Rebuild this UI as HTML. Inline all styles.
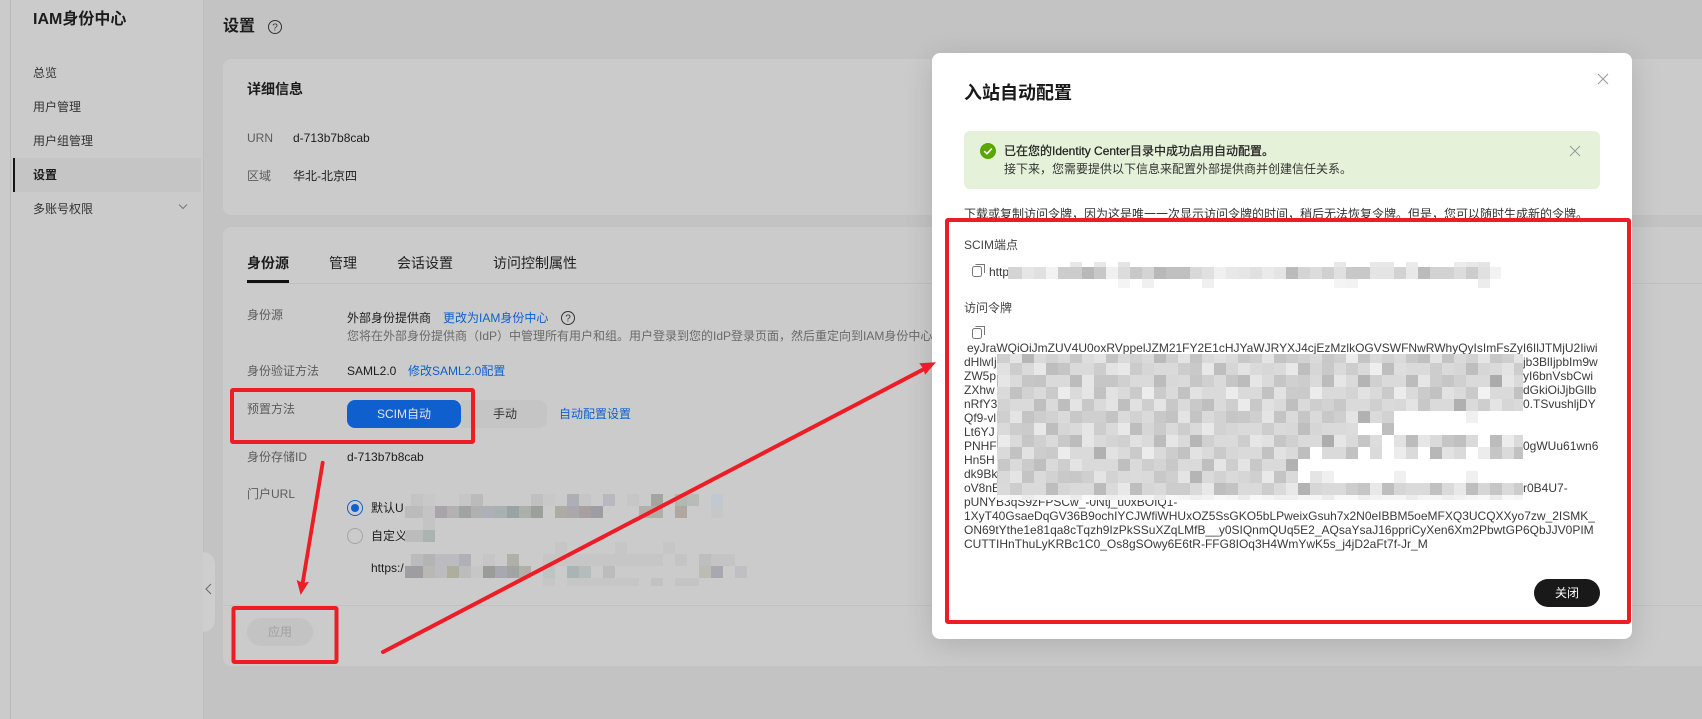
<!DOCTYPE html>
<html lang="zh-CN"><head><meta charset="utf-8"><title>入站自动配置</title>
<style>
html,body{margin:0;padding:0}
body{width:1702px;height:719px;overflow:hidden;position:relative;background:#c3c3c3;font-family:"Liberation Sans","Noto Sans CJK SC",sans-serif;font-size:12px;color:#1c1c1c}
.a{position:absolute}
.t{position:absolute;white-space:nowrap;line-height:16px;font-size:12px}
.g{color:#5c5c5c}
.l{color:#0f5fcf}
.b{font-weight:bold}
.k{position:absolute;left:964px;white-space:nowrap;line-height:14px;font-size:12px;color:#3a3a3a}
</style></head><body>

<div class="a" style="left:0;top:0;width:10px;height:719px;background:#cbcbcb"></div>
<div class="a" style="left:10px;top:0;width:1px;height:719px;background:#b9b9b9"></div>
<div class="a" style="left:11px;top:0;width:192px;height:719px;background:#cbcbcb;border-right:1px solid #bdbdbd"></div>
<div class="t b" style="left:33px;top:11px;font-size:16px;line-height:18px">IAM身份中心</div>
<div class="t" style="left:33px;top:65px;color:#333">总览</div>
<div class="t" style="left:33px;top:99px;color:#333">用户管理</div>
<div class="t" style="left:33px;top:133px;color:#333">用户组管理</div>
<div class="a" style="left:13px;top:158px;width:188px;height:34px;background:#c5c5c5"></div>
<div class="a" style="left:13px;top:158px;width:2px;height:34px;background:#151515"></div>
<div class="t b" style="left:33px;top:167px">设置</div>
<div class="t" style="left:33px;top:201px;color:#333">多账号权限</div>
<svg class="a" style="left:178px;top:203px" width="10" height="8"><path d="M1 1.5L5 5.5L9 1.5" fill="none" stroke="#777" stroke-width="1"/></svg>
<div class="a" style="left:203px;top:552px;width:12px;height:80px;background:#cecece;border-radius:0 12px 12px 0"></div>
<svg class="a" style="left:205px;top:583px" width="8" height="12"><path d="M6 1L1 6L6 11" fill="none" stroke="#6d6d6d" stroke-width="1.1"/></svg>

<div class="t b" style="left:223px;top:18px;font-size:16px;line-height:18px">设置</div>
<svg class="a" style="left:267px;top:19px" width="16" height="16"><circle cx="8" cy="8" r="6.5" fill="none" stroke="#333" stroke-width="1"/><text x="8" y="11.5" font-size="10" text-anchor="middle" fill="#333" font-family="Liberation Sans">?</text></svg>

<div class="a" style="left:223px;top:59px;width:1479px;height:156px;background:#cbcbcb;border-radius:8px 0 0 8px"></div>
<div class="t b" style="left:247px;top:81px;font-size:14px">详细信息</div>
<div class="t g" style="left:247px;top:130px">URN</div>
<div class="t" style="left:293px;top:130px">d-713b7b8cab</div>
<div class="t g" style="left:247px;top:168px">区域</div>
<div class="t" style="left:293px;top:168px">华北-北京四</div>

<div class="a" style="left:223px;top:227px;width:1479px;height:439px;background:#cbcbcb;border-radius:8px 0 0 8px"></div>
<div class="t b" style="left:247px;top:255px;font-size:14px">身份源</div>
<div class="t" style="left:329px;top:255px;font-size:14px;color:#222">管理</div>
<div class="t" style="left:397px;top:255px;font-size:14px;color:#222">会话设置</div>
<div class="t" style="left:493px;top:255px;font-size:14px;color:#222">访问控制属性</div>
<div class="a" style="left:247px;top:283px;width:1455px;height:1px;background:#c0c0c0"></div>
<div class="a" style="left:247px;top:280px;width:42px;height:3px;background:#111"></div>

<div class="t g" style="left:247px;top:307px">身份源</div>
<div class="t" style="left:347px;top:310px">外部身份提供商</div>
<div class="t l" style="left:443px;top:310px">更改为IAM身份中心</div>
<svg class="a" style="left:560px;top:310px" width="16" height="16"><circle cx="8" cy="8" r="6.5" fill="none" stroke="#333" stroke-width="1"/><text x="8" y="11.5" font-size="10" text-anchor="middle" fill="#333" font-family="Liberation Sans">?</text></svg>
<div class="t" style="left:347px;top:328px;color:#6a6a6a;width:585px;overflow:hidden">您将在外部身份提供商（IdP）中管理所有用户和组。用户登录到您的IdP登录页面，然后重定向到IAM身份中心</div>
<div class="t g" style="left:247px;top:363px">身份验证方法</div>
<div class="t" style="left:347px;top:363px">SAML2.0</div>
<div class="t l" style="left:408px;top:363px">修改SAML2.0配置</div>
<div class="t g" style="left:247px;top:401px">预置方法</div>
<div class="a" style="left:461px;top:400px;width:86px;height:28px;background:#c5c5c5;border-radius:0 8px 8px 0"></div>
<div class="t" style="left:493px;top:406px;color:#333">手动</div>
<div class="a" style="left:347px;top:400px;width:114px;height:28px;line-height:28px;text-align:center;background:#0f5fcf;border-radius:8px;color:#e4e4e4">SCIM自动</div>
<div class="t l" style="left:559px;top:406px">自动配置设置</div>
<div class="t g" style="left:247px;top:449px">身份存储ID</div>
<div class="t" style="left:347px;top:449px">d-713b7b8cab</div>
<div class="t g" style="left:247px;top:486px">门户URL</div>
<svg class="a" style="left:346px;top:499px" width="18" height="46"><circle cx="9" cy="9" r="7.5" fill="none" stroke="#0f5fcf" stroke-width="1"/><circle cx="9" cy="9" r="4" fill="#0f5fcf"/><circle cx="9" cy="37" r="7.5" fill="none" stroke="#a5a5a5" stroke-width="1"/></svg>
<div class="t" style="left:371px;top:500px">默认U</div>
<div class="t" style="left:371px;top:528px">自定义</div>
<div class="t" style="left:371px;top:560px">https:/</div>
<div class="a" style="left:223px;top:605px;width:1479px;height:1px;background:#c1c1c1"></div>
<div class="a" style="left:247px;top:618px;width:66px;height:28px;line-height:28px;text-align:center;background:#c3c3c3;border-radius:14px;color:#a0a0a0">应用</div>

<!-- modal -->
<div class="a" style="left:932px;top:53px;width:700px;height:586px;background:#fff;border-radius:8px;box-shadow:0 6px 30px rgba(0,0,0,.14)"></div>
<div class="t b" style="left:964px;top:82px;font-size:18px;line-height:22px;color:#191919">入站自动配置</div>
<svg class="a" style="left:1597px;top:73px" width="12" height="12"><path d="M1 1L11 11M11 1L1 11" stroke="#999" stroke-width="1" fill="none"/></svg>
<div class="a" style="left:964px;top:131px;width:636px;height:58px;background:#e5f1d8;border-radius:6px"></div>
<svg class="a" style="left:980px;top:143px" width="16" height="16"><circle cx="8" cy="8" r="8" fill="#5aa700"/><path d="M4.2 8.2L7 10.8L11.8 5.6" fill="none" stroke="#fff" stroke-width="1.6"/></svg>
<div class="t" style="left:1004px;top:143px;color:#222;-webkit-text-stroke:.25px #222">已在您的Identity Center目录中成功启用自动配置。</div>
<div class="t" style="left:1004px;top:161px;color:#333">接下来，您需要提供以下信息来配置外部提供商并创建信任关系。</div>
<svg class="a" style="left:1569px;top:145px" width="12" height="12"><path d="M1 1L11 11M11 1L1 11" stroke="#999" stroke-width="1" fill="none"/></svg>
<div class="t" style="left:964px;top:206px;color:#333">下载或复制访问令牌，因为这是唯一一次显示访问令牌的时间，稍后无法恢复令牌。但是，您可以随时生成新的令牌。</div>
<div class="a" style="left:949px;top:222px;width:678px;height:398px;background:#fff"></div>
<div class="t" style="left:964px;top:237px;color:#444">SCIM端点</div>
<svg class="a" style="left:971px;top:263px" width="16" height="15"><rect x="1.5" y="3.5" width="9" height="10" rx="2" fill="none" stroke="#777"/><path d="M4.5 1.5H13.5V10" fill="none" stroke="#777"/></svg>
<div class="t" style="left:989px;top:264px;color:#333">http</div>
<div class="t" style="left:964px;top:300px;color:#444">访问令牌</div>
<svg class="a" style="left:971px;top:325px" width="16" height="15"><rect x="1.5" y="3.5" width="9" height="10" rx="2" fill="none" stroke="#777"/><path d="M4.5 1.5H13.5V10" fill="none" stroke="#777"/></svg>

<div class="k" style="left:967px;top:341px">eyJraWQiOiJmZUV4U0oxRVppelJZM21FY2E1cHJYaWJRYXJ4cjEzMzlkOGVSWFNwRWhyQyIsImFsZyI6IlJTMjU2Iiwi</div>
<div class="k" style="top:355px">dHlwIj</div><div class="k" style="left:1523px;top:355px">jb3BlIjpbIm9w</div>
<div class="k" style="top:369px">ZW5p</div><div class="k" style="left:1523px;top:369px">yI6bnVsbCwi</div>
<div class="k" style="top:383px">ZXhw</div><div class="k" style="left:1523px;top:383px">dGkiOiJjbGllb</div>
<div class="k" style="top:397px">nRfY3</div><div class="k" style="left:1523px;top:397px">0.TSvushljDY</div>
<div class="k" style="top:411px">Qf9-vl</div>
<div class="k" style="top:425px">Lt6YJ</div>
<div class="k" style="top:439px">PNHF</div><div class="k" style="left:1523px;top:439px">0gWUu61wn6</div>
<div class="k" style="top:453px">Hn5H</div>
<div class="k" style="top:467px">dk9Bk</div>
<div class="k" style="top:481px">oV8nE</div><div class="k" style="left:1523px;top:481px">r0B4U7-</div>
<div class="k" style="top:495px">pUNYB3qS9zFPSCw_-0Ntj_u0xBOIQ1-</div>
<div class="k" style="top:509px">1XyT40GsaeDqGV36B9ochIYCJWfiWHUxOZ5SsGKO5bLPweixGsuh7x2N0eIBBM5oeMFXQ3UCQXXyo7zw_2ISMK_</div>
<div class="k" style="top:523px">ON69tYthe1e81qa8cTqzh9IzPkSSuXZqLMfB__y0SIQnmQUq5E2_AQsaYsaJ16ppriCyXen6Xm2PbwtGP6QbJJV0PIM</div>
<div class="k" style="top:537px">CUTTIHnThuLyKRBc1C0_Os8gSOwy6E6tR-FFG8IOq3H4WmYwK5s_j4jD2aFt7f-Jr_M</div>
<div class="a" style="left:1534px;top:579px;width:66px;height:28px;line-height:28px;text-align:center;background:#191919;border-radius:14px;color:#fff">关闭</div>

<!-- overlay: mosaics, red annotations -->
<svg class="a" style="left:0;top:0" width="1702" height="719" shape-rendering="crispEdges">
<defs>
<pattern id="pa" patternUnits="userSpaceOnUse" x="998" y="351" width="84" height="60">
<rect width="84" height="60" fill="#dadada"/>
<rect x="0" width="12" height="12" fill="#cfcfcf"/><rect x="12" width="12" height="12" fill="#e4e4e4"/><rect x="24" width="12" height="12" fill="#c4c4c4"/><rect x="48" width="12" height="12" fill="#d2d2d2"/><rect x="72" width="12" height="12" fill="#c8c8c8"/>
<rect x="12" y="12" width="12" height="12" fill="#cdcdcd"/><rect x="36" y="12" width="12" height="12" fill="#e8e8e8"/><rect x="48" y="12" width="12" height="12" fill="#bebebe"/><rect x="60" y="12" width="12" height="12" fill="#d6d6d6"/>
<rect x="0" y="24" width="12" height="12" fill="#e6e6e6"/><rect x="24" y="24" width="12" height="12" fill="#c6c6c6"/><rect x="36" y="24" width="12" height="12" fill="#d0d0d0"/><rect x="72" y="24" width="12" height="12" fill="#bcbcbc"/>
<rect x="12" y="36" width="12" height="12" fill="#c2c2c2"/><rect x="24" y="36" width="12" height="12" fill="#e2e2e2"/><rect x="48" y="36" width="12" height="12" fill="#cacaca"/><rect x="60" y="36" width="12" height="12" fill="#ececec"/>
<rect x="0" y="48" width="12" height="12" fill="#c8c8c8"/><rect x="36" y="48" width="12" height="12" fill="#bfbfbf"/><rect x="60" y="48" width="12" height="12" fill="#cecece"/><rect x="72" y="48" width="12" height="12" fill="#e4e4e4"/>
</pattern>
<pattern id="pb" patternUnits="userSpaceOnUse" x="998" y="351" width="132" height="36">
<rect x="24" width="12" height="12" fill="#000" opacity=".07"/><rect x="84" width="12" height="12" fill="#fff" opacity=".3"/>
<rect x="60" y="12" width="12" height="12" fill="#000" opacity=".08"/><rect x="108" y="12" width="12" height="12" fill="#fff" opacity=".25"/><rect x="0" y="12" width="12" height="12" fill="#fff" opacity=".2"/>
<rect x="36" y="24" width="12" height="12" fill="#000" opacity=".06"/><rect x="96" y="24" width="12" height="12" fill="#000" opacity=".09"/>
</pattern>
</defs>
<rect x="997" y="354" width="526" height="146" fill="url(#pa)"/>
<rect x="997" y="354" width="526" height="146" fill="url(#pb)"/>
<g fill="#fff">
<rect x="1394" y="411" width="129" height="24"/>
<rect x="1358" y="423" width="24" height="12"/>
<rect x="1382" y="435" width="12" height="12"/><rect x="1478" y="435" width="12" height="12"/>
<rect x="1310" y="447" width="12" height="12"/><rect x="1358" y="447" width="12" height="12"/><rect x="1382" y="447" width="12" height="12"/><rect x="1418" y="447" width="12" height="12"/><rect x="1466" y="447" width="12" height="12"/>
<rect x="1298" y="459" width="225" height="24"/>
<rect x="997" y="495" width="526" height="5" opacity=".72"/>
</g>
<rect x="1466" y="411" width="12" height="12" fill="#f0f0f0"/>
<rect x="1310" y="471" width="12" height="12" fill="#e4e4e4"/><rect x="1322" y="471" width="12" height="12" fill="#f0f0f0"/><rect x="1394" y="471" width="12" height="12" fill="#f0f0f0"/><rect x="1466" y="471" width="12" height="12" fill="#f0f0f0"/>

<!-- SCIM endpoint mosaic -->
<g>
<rect x="1008" y="267" width="14" height="12" fill="#d4d4d4"/><rect x="1022" y="267" width="12" height="12" fill="#e6e6e6"/><rect x="1034" y="267" width="12" height="12" fill="#e0e0e0"/><rect x="1046" y="267" width="12" height="12" fill="#f2f2f2"/><rect x="1058" y="267" width="24" height="12" fill="#cccccc"/><rect x="1082" y="267" width="12" height="12" fill="#b8b8b8"/><rect x="1094" y="267" width="12" height="12" fill="#c8c8c8"/><rect x="1106" y="267" width="12" height="12" fill="#f0f0f0"/><rect x="1118" y="267" width="12" height="12" fill="#dcdcdc"/><rect x="1130" y="267" width="12" height="12" fill="#c8c8c8"/><rect x="1142" y="267" width="12" height="12" fill="#d4d4d4"/><rect x="1154" y="267" width="12" height="12" fill="#b8b8b8"/><rect x="1166" y="267" width="24" height="12" fill="#c0c0c0"/><rect x="1190" y="267" width="12" height="12" fill="#d8d8d8"/><rect x="1202" y="267" width="12" height="12" fill="#e0e0e0"/><rect x="1214" y="267" width="12" height="12" fill="#f0f0f0"/><rect x="1226" y="267" width="12" height="12" fill="#e8e8e8"/><rect x="1238" y="267" width="12" height="12" fill="#e6e6e6"/><rect x="1250" y="267" width="12" height="12" fill="#e0e0e0"/><rect x="1262" y="267" width="12" height="12" fill="#eaeaea"/><rect x="1274" y="267" width="12" height="12" fill="#e4e4e4"/><rect x="1286" y="267" width="12" height="12" fill="#bbbbbb"/><rect x="1298" y="267" width="12" height="12" fill="#d4d4d4"/><rect x="1310" y="267" width="12" height="12" fill="#dcdcdc"/><rect x="1322" y="267" width="12" height="12" fill="#d0d0d0"/><rect x="1334" y="267" width="12" height="12" fill="#e0e0e0"/><rect x="1346" y="267" width="24" height="12" fill="#c8c8c8"/><rect x="1370" y="267" width="24" height="12" fill="#e4e4e4"/><rect x="1394" y="267" width="12" height="12" fill="#d2d2d2"/><rect x="1406" y="267" width="12" height="12" fill="#e8e8e8"/><rect x="1418" y="267" width="12" height="12" fill="#bbbbbb"/><rect x="1430" y="267" width="24" height="12" fill="#d2d2d2"/><rect x="1454" y="267" width="12" height="12" fill="#dcdcdc"/><rect x="1466" y="267" width="12" height="12" fill="#cccccc"/><rect x="1478" y="267" width="12" height="12" fill="#e0e0e0"/><rect x="1490" y="267" width="11" height="12" fill="#f2f2f2"/>
<rect x="1070" y="262" width="12" height="5" fill="#e8e8e8"/><rect x="1094" y="262" width="12" height="5" fill="#e8e8e8"/><rect x="1118" y="262" width="12" height="5" fill="#e4e4e4"/><rect x="1334" y="262" width="12" height="5" fill="#e8e8e8"/><rect x="1370" y="262" width="24" height="5" fill="#e8e8e8"/><rect x="1406" y="262" width="12" height="5" fill="#eaeaea"/><rect x="1454" y="262" width="12" height="5" fill="#ececec"/><rect x="1466" y="262" width="12" height="5" fill="#e8e8e8"/><rect x="1478" y="262" width="12" height="5" fill="#e4e4e4"/>
<rect x="1118" y="279" width="12" height="9" fill="#f4f4f4"/><rect x="1142" y="279" width="12" height="9" fill="#f0f0f0"/><rect x="1202" y="279" width="12" height="9" fill="#f0f0f0"/><rect x="1334" y="279" width="12" height="9" fill="#f4f4f4"/><rect x="1346" y="279" width="12" height="9" fill="#f2f2f2"/><rect x="1478" y="279" width="12" height="9" fill="#ececec"/>
</g>

<!-- portal url mosaic -->
<g>
<rect x="411" y="494" width="12" height="12" fill="#c4c4c4"/><rect x="423" y="494" width="12" height="12" fill="#c8c8c8"/><rect x="459" y="494" width="12" height="12" fill="#c6c6c6"/><rect x="471" y="494" width="12" height="12" fill="#bbbbbb"/><rect x="531" y="494" width="12" height="12" fill="#c0c0c0"/><rect x="543" y="494" width="12" height="12" fill="#c8c8c8"/><rect x="567" y="494" width="12" height="12" fill="#aeaeb6"/><rect x="579" y="494" width="12" height="12" fill="#c6c6c6"/><rect x="603" y="494" width="12" height="12" fill="#b8b8c0"/><rect x="627" y="494" width="12" height="12" fill="#c6c6c6"/><rect x="651" y="494" width="12" height="12" fill="#a5a5a0"/><rect x="675" y="494" width="12" height="12" fill="#b0b8b0"/><rect x="687" y="494" width="12" height="12" fill="#b8bcb8"/><rect x="711" y="494" width="12" height="12" fill="#c0c8d0"/>
<rect x="405" y="506" width="18" height="12" fill="#bbbbbb"/><rect x="423" y="506" width="12" height="12" fill="#c4c4c4"/><rect x="435" y="506" width="12" height="12" fill="#a8a4a8"/><rect x="447" y="506" width="12" height="12" fill="#b4b0b4"/><rect x="459" y="506" width="12" height="12" fill="#a0a4a0"/><rect x="471" y="506" width="12" height="12" fill="#b0b0b0"/><rect x="483" y="506" width="12" height="12" fill="#aeb0b8"/><rect x="495" y="506" width="12" height="12" fill="#a8b0b0"/><rect x="507" y="506" width="12" height="12" fill="#98a4a4"/><rect x="519" y="506" width="12" height="12" fill="#acb0ac"/><rect x="531" y="506" width="12" height="12" fill="#9ca09c"/><rect x="555" y="506" width="12" height="12" fill="#aeaaa4"/><rect x="567" y="506" width="12" height="12" fill="#aaa8ac"/><rect x="579" y="506" width="12" height="12" fill="#a8a0a0"/><rect x="591" y="506" width="12" height="12" fill="#a09ca4"/><rect x="639" y="506" width="12" height="12" fill="#b4b0a8"/><rect x="651" y="506" width="12" height="12" fill="#b0aea8"/><rect x="675" y="506" width="12" height="12" fill="#b0a8a0"/><rect x="711" y="506" width="12" height="12" fill="#c4c8c8"/>
<rect x="423" y="518" width="12" height="12" fill="#c4c4c4"/><rect x="405" y="530" width="18" height="12" fill="#bcbcbc"/><rect x="423" y="530" width="12" height="12" fill="#aab4b0"/>
<rect x="555" y="542" width="12" height="12" fill="#c6c6c6"/><rect x="615" y="542" width="12" height="12" fill="#c6c6c6"/><rect x="663" y="542" width="12" height="12" fill="#c6c6c6"/>
<rect x="543" y="554" width="120" height="12" fill="#c6c6c6"/><rect x="411" y="554" width="12" height="12" fill="#b8bcbc"/><rect x="423" y="554" width="12" height="12" fill="#b4b4b4"/><rect x="435" y="554" width="12" height="12" fill="#bcbcc0"/><rect x="447" y="554" width="12" height="12" fill="#bcbcc0"/><rect x="459" y="554" width="12" height="12" fill="#b0b0b8"/><rect x="483" y="554" width="12" height="12" fill="#c6c6c6"/><rect x="507" y="554" width="12" height="12" fill="#b0b0a8"/><rect x="675" y="554" width="12" height="12" fill="#c4c4c4"/><rect x="699" y="554" width="12" height="12" fill="#bebec0"/><rect x="711" y="554" width="24" height="12" fill="#c4c4c4"/>
<rect x="405" y="566" width="18" height="12" fill="#9e9ea2"/><rect x="423" y="566" width="12" height="12" fill="#b8b8b4"/><rect x="435" y="566" width="12" height="12" fill="#bcbcc0"/><rect x="447" y="566" width="12" height="12" fill="#aeae9e"/><rect x="459" y="566" width="12" height="12" fill="#bcbcbc"/><rect x="471" y="566" width="12" height="12" fill="#c6c6c6"/><rect x="483" y="566" width="12" height="12" fill="#9a9c98"/><rect x="495" y="566" width="12" height="12" fill="#a8a8b0"/><rect x="507" y="566" width="12" height="12" fill="#a0a4a4"/><rect x="519" y="566" width="12" height="12" fill="#b0b0a8"/><rect x="543" y="566" width="12" height="12" fill="#bcc4c4"/><rect x="567" y="566" width="12" height="12" fill="#aab4b4"/><rect x="579" y="566" width="12" height="12" fill="#b4bcbc"/><rect x="603" y="566" width="12" height="12" fill="#bcbcbc"/><rect x="699" y="566" width="12" height="12" fill="#bcbcb4"/><rect x="711" y="566" width="12" height="12" fill="#a8a8b0"/><rect x="735" y="566" width="12" height="12" fill="#c0c0c4"/>
<rect x="543" y="578" width="12" height="8" fill="#c6c6c6"/><rect x="567" y="578" width="72" height="8" fill="#c6c6c6"/><rect x="651" y="578" width="12" height="8" fill="#c2c2c2"/><rect x="675" y="578" width="24" height="8" fill="#c4c4c4"/>
</g>

<g shape-rendering="auto" fill="none" stroke="#ee1c25" stroke-linejoin="round">
<rect x="232" y="390" width="241" height="52" stroke-width="4" rx="1"/>
<rect x="233.500" y="608" width="103" height="54" stroke-width="4" rx="1"/>
<rect x="947" y="220" width="682" height="402" stroke-width="4" rx="1"/>
<path d="M322.700 462.700L302.500 584" stroke-width="3.800" stroke-linecap="round"/>
<path d="M383 652L926 368" stroke-width="4" stroke-linecap="round"/>
</g>
<g shape-rendering="auto" fill="#ee1c25">
<path d="M296.700 580L300.700 595L309 581.700L303 583Z"/>
<path d="M936 362.300L919.300 363.300L923.500 369L925 374.700Z"/>
</g>
</svg>
</body></html>
